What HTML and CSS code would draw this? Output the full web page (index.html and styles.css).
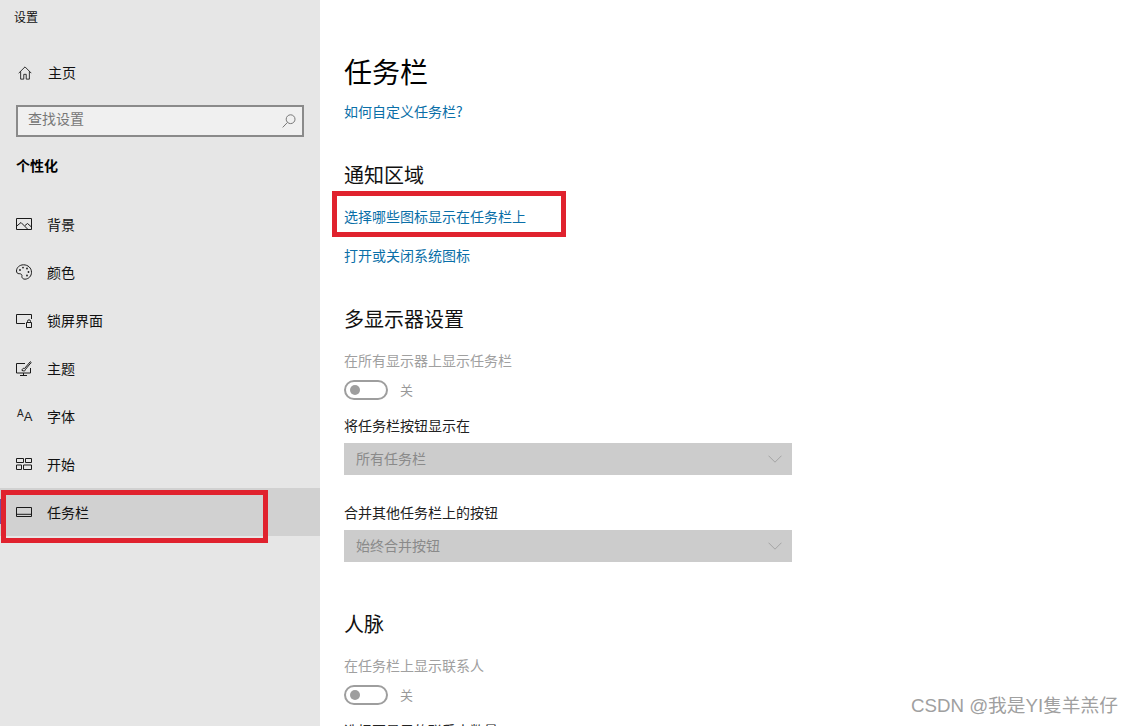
FILE: index.html
```html
<!DOCTYPE html>
<html lang="zh-CN">
<head>
<meta charset="utf-8">
<title>设置</title>
<link rel="stylesheet" href="styles.css">
</head>
<body>
<div class="app">
  <aside class="sidebar">
    <div class="app-title">设置</div>
    <div class="nav-row home">
      <svg class="ico" viewBox="0 0 16 16"><path d="M.8 8.2 8 1l7.2 7.2M3 6.2V15h3.6V9.5h2.8V15H13V6.2"/></svg>
      <span>主页</span>
    </div>
    <div class="search">
      <span>查找设置</span>
      <svg class="search-ico" viewBox="0 0 14 14"><circle cx="8.6" cy="5.2" r="4.4"/><path d="M5.5 8.4.7 13.4"/></svg>
    </div>
    <div class="group">个性化</div>
    <nav class="nav">
      <div class="nav-row">
        <svg class="ico" viewBox="0 0 16 16"><path d="M.5 2.5h15v11H.5zM.8 10 5 6.5l6.5 6.5M9 9.5l2.5-2 4 3.5"/></svg>
        <span>背景</span>
      </div>
      <div class="nav-row">
        <svg class="ico" viewBox="0 0 16 16"><path d="M7.5.8C3.5.8.5 3.6.5 7c0 1.6 1 2.7 2.4 2.7 1.3 0 2.4.2 2.9 1.2.5 1-.3 1.500.3 2.700.5 1 1.500 1.600 3 1.600 3.600-.3 6.400-3 6.400-6.900C15.500 4 12 .8 7.500.8z"/><circle class="dot" cx="4" cy="6" r=".9"/><circle class="dot" cx="7" cy="3.600" r=".9"/><circle class="dot" cx="11" cy="4.500" r=".9"/><circle class="dot" cx="12.500" cy="8" r=".9"/><circle class="dot" cx="11" cy="11.500" r=".9"/></svg>
        <span>颜色</span>
      </div>
      <div class="nav-row">
        <svg class="ico" viewBox="0 0 16 16"><path d="M9 11.500H.5v-9h15V7M10.500 10.500h5v5h-5zM11.500 10.500V9.300a1.500 1.500 0 0 1 3 0v1.200"/></svg>
        <span>锁屏界面</span>
      </div>
      <div class="nav-row">
        <svg class="ico" viewBox="0 0 16 16"><path d="M9 3.500H.5v9.500h14V8M7.500 13v2.500M4 15.500h7M6 10.500c0-2 1.500-2.500 2.500-2l5.800-6.800.9.800-5.700 6.900c.3 1.100-1 2.100-3.500 1.100z"/></svg>
        <span>主题</span>
      </div>
      <div class="nav-row">
        <span class="font-ico"><span class="a1">A</span><span class="a2">A</span></span>
        <span>字体</span>
      </div>
      <div class="nav-row">
        <svg class="ico" viewBox="0 0 16 16"><path d="M.5 2.500h7v4h-7zM9.500 2.500h6v4h-6zM.5 9h5v4.500h-5zM7.500 9h8v4.500h-8z"/></svg>
        <span>开始</span>
      </div>
      <div class="nav-row active">
        <span class="accent"></span>
        <svg class="ico" viewBox="0 0 16 16"><path d="M.5 3.500h15v9H.5zM.5 10.300h15"/></svg>
        <span>任务栏</span>
      </div>
    </nav>
  </aside>
  <main class="content">
    <h1>任务栏</h1>
    <a class="link help">如何自定义任务栏?</a>
    <h2 class="first">通知区域</h2>
    <a class="link pick">选择哪些图标显示在任务栏上</a>
    <a class="link sys">打开或关闭系统图标</a>
    <h2 class="multi">多显示器设置</h2>
    <div class="label muted">在所有显示器上显示任务栏</div>
    <div class="toggle-row">
      <span class="toggle"><span class="knob"></span></span><span class="state">关</span>
    </div>
    <div class="label dark-label">将任务栏按钮显示在</div>
    <div class="select first-select">
      <span>所有任务栏</span>
      <svg class="chev" viewBox="0 0 14 8"><path d="M.5.700 7 7.200 13.500.700"/></svg>
    </div>
    <div class="label merge">合并其他任务栏上的按钮</div>
    <div class="select">
      <span>始终合并按钮</span>
      <svg class="chev" viewBox="0 0 14 8"><path d="M.5.700 7 7.200 13.500.700"/></svg>
    </div>
    <h2 class="people">人脉</h2>
    <div class="label muted">在任务栏上显示联系人</div>
    <div class="toggle-row">
      <span class="toggle"><span class="knob"></span></span><span class="state">关</span>
    </div>
    <div class="label dark-label">选择要显示的联系人数量</div>
  </main>
</div>
<div class="mark mark-nav"></div>
<div class="mark mark-link"></div>
<div class="watermark">CSDN @我是YI隻羊羔仔</div>
</body>
</html>
```
FILE: styles.css
```css
* { box-sizing: border-box; }
html, body { margin: 0; height: 726px; overflow: hidden; background: #fff; }
body { font-family: "Noto Sans CJK SC", "Liberation Sans", sans-serif; font-size: 14px; color: #000; }

.app { display: flex; height: 726px; overflow: hidden; }

.sidebar { width: 320px; flex: none; background: #e6e6e6; }
.app-title { font-size: 12px; line-height: 16px; padding: 9px 0 0 14px; height: 49px; color: #111; }
.nav-row { display: flex; align-items: center; height: 48px; padding-left: 16px; font-size: 14px; color: #111; }
.nav-row > span:last-child { margin-left: 15px; }
.home { padding-left: 18px; }
.home .ico { width: 14px; height: 14px; margin-right: 1px; }
.home span { padding-bottom: 3px; }
.ico { width: 16px; height: 16px; flex: none; fill: none; stroke: #1a1a1a; stroke-width: 1; }
.ico .dot { fill: #1a1a1a; stroke: none; }
.font-ico { width: 16px; height: 16px; flex: none; display: flex; align-items: flex-end; font-family: "Liberation Sans", sans-serif; color: #222; padding-left: 1px; }
.font-ico .a1 { font-size: 10px; line-height: 12px; align-self: flex-start; }
.font-ico .a2 { font-size: 13px; line-height: 14px; }

.search { margin: 8px 16px 0 16px; height: 32px; border: 2px solid #8a8a8a; background: #f0f0f0; display: flex; align-items: center; justify-content: space-between; padding: 0 6px 0 10px; color: #777; font-size: 14px; }
.search span { padding-bottom: 7px; }
.search-ico { width: 14px; height: 14px; fill: none; stroke: #777; stroke-width: 1; }
.group { margin-top: 19px; font-weight: 700; font-size: 14px; line-height: 18px; padding-left: 16px; height: 18px; }
.nav { margin-top: 26px; }
.active { background: #d1d1d1; position: relative; }
.accent { position: absolute; left: 0; top: 11px; width: 1px; height: 25px; background: #7a4a9a; }

.content { flex: 1; padding-left: 24px; min-width: 0; }
h1 { margin: 51px 0 0; font-weight: 400; font-size: 28px; line-height: 40px; }
h2 { margin: 0; font-weight: 400; font-size: 20px; line-height: 28px; color: #111; }
.link { display: block; font-size: 14px; line-height: 20px; color: #0a6fa8; }
.help { margin-top: 10px; }
h2.first { margin-top: 40px; }
.pick { margin-top: 17px; }
.sys { margin-top: 19px; }
h2.multi { margin-top: 40px; }
.label { font-size: 14px; line-height: 20px; }
.muted { color: #a0a0a0; margin-top: 17px; }
.dark-label { color: #222; }
.toggle-row { display: flex; align-items: center; height: 20px; margin: 10px 0 15px; }
.toggle { width: 44px; height: 20px; border: 2px solid #9e9e9e; border-radius: 10px; display: flex; align-items: center; padding-left: 4px; }
.knob { width: 10px; height: 10px; border-radius: 50%; background: #9e9e9e; }
.state { margin-left: 12px; font-size: 13px; color: #999; padding-bottom: 2px; }
.select { margin-top: 8px; width: 448px; height: 32px; background: #cccccc; color: #8a8a8a; font-size: 14px; display: flex; align-items: center; justify-content: space-between; padding: 0 10px 0 12px; }
.select span { padding-bottom: 2px; }
.chev { width: 14px; height: 8px; fill: none; stroke: #a3a3a3; stroke-width: 1; }
.merge { margin-top: 27px; color: #222; }
h2.people { margin-top: 48px; }

.mark { position: absolute; border: 5px solid #e0222e; }
.mark-nav { left: 1px; top: 490px; width: 267px; height: 53px; }
.mark-link { left: 332px; top: 191px; width: 234px; height: 46px; }
.watermark { position: absolute; left: 911px; top: 692px; font-family: "Liberation Sans", "Noto Sans CJK SC", sans-serif; font-size: 18.700px; line-height: 28px; color: #a0a0a0; white-space: nowrap; }
```
